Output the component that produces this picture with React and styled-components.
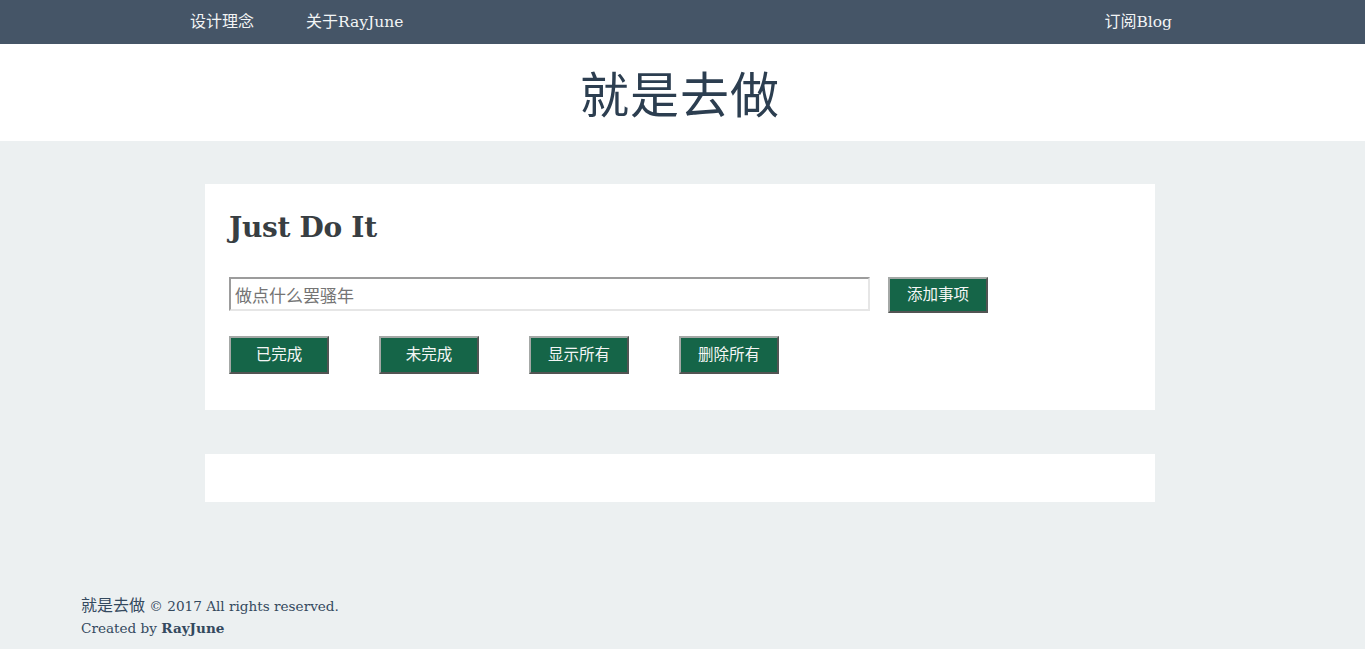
import React, { useState } from 'react';
import styled, { createGlobalStyle } from 'styled-components';

const GlobalStyle = createGlobalStyle`
  html, body {
    margin: 0;
    padding: 0;
    background: #ecf0f1;
  }
  body {
    font-family: "DejaVu Serif", "Noto Sans CJK SC", serif;
    color: #34495e;
  }
`;

const cjk = '"Noto Sans CJK SC", "Noto Sans", sans-serif';

const TopBar = styled.nav`
  height: 44px;
  background-color: #455567;
`;

const TopInner = styled.div`
  width: 985px;
  height: 100%;
  margin: 0 auto;
  padding: 0 3px 0 0;
  box-sizing: border-box;
  display: flex;
  align-items: center;
  justify-content: space-between;
`;

const NavGroup = styled.div`
  display: flex;
  gap: 52px;
`;

const NavLink = styled.a`
  color: #f2f4f5;
  font-size: 15.5px;
  text-decoration: none;
  cursor: pointer;
  line-height: 1;
  padding-bottom: 2px;
`;

const Banner = styled.header`
  height: 97px;
  background: #fff;
  display: flex;
  align-items: center;
  justify-content: center;
`;

const BannerTitle = styled.h1`
  margin: 0 0 2px -5px;
  font-family: "Noto Sans CJK SC", serif;
  font-weight: 400;
  font-size: 49px;
  letter-spacing: 1px;
  color: #2c3e50;
`;

const Main = styled.main`
  padding-top: 43px;
  display: flex;
  flex-direction: column;
  align-items: center;
  gap: 44px;
  margin-left: -5px;
`;

const Card = styled.section`
  width: 950px;
  box-sizing: border-box;
  background: #fff;
  padding: ${(p) => (p.$empty ? '0' : '24px 24px 36px')};
  min-height: ${(p) => (p.$empty ? '48px' : 'auto')};
`;

const CardTitle = styled.h2`
  margin: 3px 0 32px;
  font-family: "DejaVu Serif", serif;
  font-size: 28px;
  font-weight: 700;
  line-height: 34px;
  color: #383e42;
  letter-spacing: -0.3px;
`;

const AddRow = styled.form`
  display: flex;
  align-items: flex-start;
  gap: 18px;
  margin-bottom: 23px;
`;

const TaskInput = styled.input`
  width: 641px;
  height: 34px;
  box-sizing: border-box;
  border: 2px solid #e6e6e6;
  border-top-color: #9c9c9c;
  border-left-color: #9c9c9c;
  padding: 0 4px;
  font-family: ${cjk};
  font-size: 17px;
  color: #333;
  outline: none;

  &::placeholder {
    color: #757575;
  }
`;

const GreenButton = styled.button`
  width: 100px;
  height: ${(p) => p.$h || 38}px;
  box-sizing: border-box;
  background: #156548;
  color: #f4f6f5;
  border: 2px outset #a4a8a6;
  font-family: ${cjk};
  font-size: 15.5px;
  line-height: 1;
  cursor: pointer;
  padding: 0 0 2px;
`;

const FilterRow = styled.div`
  display: flex;
  gap: 50px;
`;

const Footer = styled.footer`
  padding: 91px 0 10px 81px;
  font-size: 13.6px;
  line-height: 22px;
  color: #34495e;
`;

const FooterLine = styled.p`
  margin: 0;
`;

const CJK = styled.span`
  font-family: ${cjk};
  font-size: 16px;
`;

export default function App() {
  const [text, setText] = useState('');

  return (
    <>
      <GlobalStyle />
      <TopBar>
        <TopInner>
          <NavGroup>
            <NavLink><CJK>设计理念</CJK></NavLink>
            <NavLink><CJK>关于</CJK>RayJune</NavLink>
          </NavGroup>
          <NavLink><CJK>订阅</CJK>Blog</NavLink>
        </TopInner>
      </TopBar>
      <Banner>
        <BannerTitle>就是去做</BannerTitle>
      </Banner>
      <Main>
        <Card>
          <CardTitle>Just Do It</CardTitle>
          <AddRow onSubmit={(e) => e.preventDefault()}>
            <TaskInput
              value={text}
              onChange={(e) => setText(e.target.value)}
              placeholder="做点什么罢骚年"
            />
            <GreenButton type="submit" $h={36}>添加事项</GreenButton>
          </AddRow>
          <FilterRow>
            <GreenButton>已完成</GreenButton>
            <GreenButton>未完成</GreenButton>
            <GreenButton>显示所有</GreenButton>
            <GreenButton>删除所有</GreenButton>
          </FilterRow>
        </Card>
        <Card $empty />
      </Main>
      <Footer>
        <FooterLine><CJK>就是去做</CJK> © 2017 All rights reserved.</FooterLine>
        <FooterLine>Created by <strong>RayJune</strong></FooterLine>
      </Footer>
    </>
  );
}
